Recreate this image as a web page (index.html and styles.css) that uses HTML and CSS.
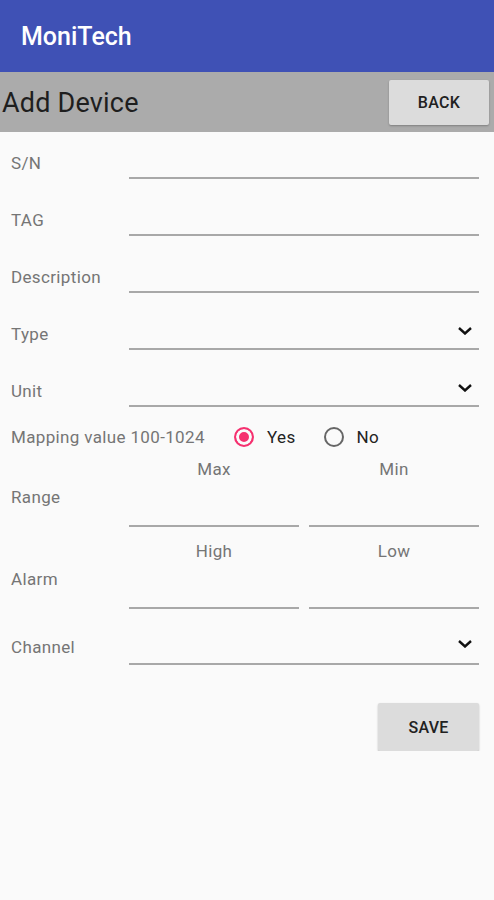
FILE: index.html
```html
<!DOCTYPE html>
<html lang="en">

<head>
    <meta charset="UTF-8" />
    <meta name="viewport" content="width=device-width, initial-scale=1.0" />
    <title>MoniTech - Add Device</title>
    <link rel="stylesheet" href="styles.css">
</head>

<body>
    <header class="appbar">
        <span class="app-title">MoniTech</span>
    </header>

    <div class="titlebar">
        <h1>Add Device</h1>
        <button type="button" class="btn btn-back">BACK</button>
    </div>

    <form class="device-form">
        <div class="field">
            <label for="sn">S/N</label>
            <input id="sn" type="text">
        </div>
        <div class="field">
            <label for="tag">TAG</label>
            <input id="tag" type="text">
        </div>
        <div class="field">
            <label for="desc">Description</label>
            <input id="desc" type="text">
        </div>
        <div class="field">
            <label for="type">Type</label>
            <div class="select-wrap">
                <select id="type"></select>
                <svg class="chevron" viewBox="0 0 14 8" width="14" height="8">
                    <polyline points="1,1 7,6.5 13,1" fill="none" stroke="#111" stroke-width="2.4" />
                </svg>
            </div>
        </div>
        <div class="field">
            <label for="unit">Unit</label>
            <div class="select-wrap">
                <select id="unit"></select>
                <svg class="chevron" viewBox="0 0 14 8" width="14" height="8">
                    <polyline points="1,1 7,6.5 13,1" fill="none" stroke="#111" stroke-width="2.4" />
                </svg>
            </div>
        </div>

        <div class="mapping">
            <span class="mapping-label">Mapping value 100-1024</span>
            <label class="radio">
                <input type="radio" name="mapping" value="yes" checked>
                <span>Yes</span>
            </label>
            <label class="radio radio-no">
                <input type="radio" name="mapping" value="no">
                <span>No</span>
            </label>
        </div>

        <div class="pair">
            <span class="pair-label">Range</span>
            <div class="pair-col">
                <span class="caption">Max</span>
                <input type="text">
            </div>
            <div class="pair-col">
                <span class="caption">Min</span>
                <input type="text">
            </div>
        </div>

        <div class="pair pair-alarm">
            <span class="pair-label">Alarm</span>
            <div class="pair-col">
                <span class="caption">High</span>
                <input type="text">
            </div>
            <div class="pair-col">
                <span class="caption">Low</span>
                <input type="text">
            </div>
        </div>

        <div class="field field-channel">
            <label for="channel">Channel</label>
            <div class="select-wrap">
                <select id="channel"></select>
                <svg class="chevron" viewBox="0 0 14 8" width="14" height="8">
                    <polyline points="1,1 7,6.5 13,1" fill="none" stroke="#111" stroke-width="2.4" />
                </svg>
            </div>
        </div>

        <div class="actions">
            <button type="button" class="btn btn-save">SAVE</button>
        </div>
    </form>
</body>

</html>
```

FILE: styles.css
```css
body {
    margin: 0;
    background-color: #fafafa;
    font-family: Roboto, "Liberation Sans", sans-serif;
    color: #757575;
}

.appbar {
    height: 72px;
    background-color: #3f51b5;
    display: flex;
    align-items: center;
    padding-left: 21px;
}

.app-title {
    color: white;
    font-size: 25px;
    font-weight: 500;
}

.titlebar {
    height: 60px;
    background-color: #ababab;
    display: flex;
    align-items: flex-start;
    justify-content: space-between;
}

.titlebar h1 {
    margin: 0;
    padding-left: 2px;
    line-height: 62px;
    font-size: 27px;
    font-weight: 400;
    letter-spacing: 0.2px;
    color: #1e1e1e;
}

.btn {
    border: none;
    border-radius: 2px;
    background-color: #dcdcdc;
    color: #212121;
    font-family: Roboto, "Liberation Sans", sans-serif;
    font-size: 16px;
    font-weight: 500;
    letter-spacing: 0.3px;
    box-shadow: 0 1px 2px rgba(0, 0, 0, 0.25);
    cursor: pointer;
}

.btn-back {
    width: 100px;
    height: 45px;
    margin: 8px 5px 0 0;
}

/* form */

.device-form {
    padding: 7px 15px 0 11px;
    font-size: 17px;
    letter-spacing: 0.35px;
}

.field {
    display: grid;
    grid-template-columns: 118px 1fr;
    align-items: end;
    height: 40px;
    margin-bottom: 17px;
}

.field label {
    line-height: 30px;
    margin-bottom: 1px;
}

input[type="text"],
.select-wrap {
    height: 40px;
    box-sizing: border-box;
    border: none;
    border-bottom: 2px solid #a8a8a8;
    background: transparent;
    outline: none;
    width: 100%;
}

.select-wrap {
    display: flex;
    align-items: center;
}

.select-wrap select {
    flex: 1;
    appearance: none;
    border: none;
    background: transparent;
    height: 100%;
}

.chevron {
    margin: 3px 7px 0 0;
}

.mapping {
    display: flex;
    align-items: center;
    height: 30px;
    margin-top: -2px;
}

.mapping-label {
    width: 221px;
}

.radio {
    display: flex;
    align-items: center;
    color: #222;
}

.radio input {
    appearance: none;
    width: 20px;
    height: 20px;
    margin: 0 13px 0 2px;
    border: 2px solid #666;
    border-radius: 50%;
    background-color: #fafafa;
}

.radio input:checked {
    border-color: #f5306f;
    background-color: #f5306f;
    box-shadow: inset 0 0 0 3px #fafafa;
}

.radio-no {
    margin-left: 26px;
}

.pair {
    display: grid;
    grid-template-columns: 108px 1fr 1fr;
    column-gap: 10px;
    align-items: end;
    margin-top: 7px;
}

.pair-label {
    line-height: 30px;
    margin-bottom: 15px;
    white-space: nowrap;
}

.pair-col {
    display: flex;
    flex-direction: column;
}

.caption {
    text-align: center;
    line-height: 20px;
}

.pair-col input[type="text"] {
    height: 48px;
}

.pair-alarm {
    margin-top: 14px;
}

.field-channel {
    margin-top: 16px;
}

.field-channel label {
    margin-bottom: 3px;
}

.field-channel .chevron {
    margin-top: -1px;
}

.actions {
    display: flex;
    justify-content: flex-end;
    margin-top: 38px;
}

.btn-save {
    width: 101px;
    height: 48px;
}
```
